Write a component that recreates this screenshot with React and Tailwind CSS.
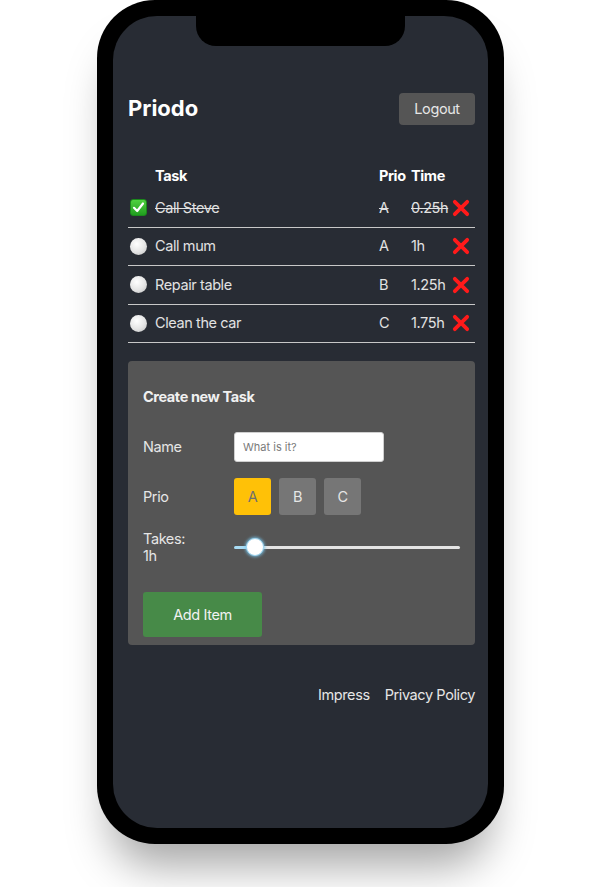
import React from "react";

const rows = [
  { done: true, name: "Call Steve", prio: "A", time: "0.25h" },
  { done: false, name: "Call mum", prio: "A", time: "1h" },
  { done: false, name: "Repair table", prio: "B", time: "1.25h" },
  { done: false, name: "Clean the car", prio: "C", time: "1.75h" },
];

function CheckBox() {
  return (
    <div className="w-[17px] h-[17px] rounded-[3px] bg-gradient-to-b from-[#4fd13f] to-[#1f9e1f] border border-[#1b8a1b] flex items-center justify-center">
      <svg width="13" height="13" viewBox="0 0 13 13">
        <path d="M2 6.8 L5.2 10 L11 2.5" fill="none" stroke="#fff" strokeWidth="2.2" strokeLinecap="round" strokeLinejoin="round" />
      </svg>
    </div>
  );
}

function Circle() {
  return (
    <div className="w-[17px] h-[17px] rounded-full bg-[radial-gradient(circle_at_40%_35%,#ffffff_0%,#e4e4e4_55%,#b9b9b9_100%)]" />
  );
}

function RedX() {
  return (
    <svg width="18" height="18" viewBox="0 0 18 18">
      <path d="M2.8 2.8 L15.2 15.2 M15.2 2.8 L2.8 15.2" stroke="#ff1a1a" strokeWidth="3.8" strokeLinecap="round" />
    </svg>
  );
}

export default function App() {
  return (
    <div className="w-[600px] h-[887px] bg-white overflow-hidden tracking-[-0.4px]" style={{ fontFamily: "Inter, 'Liberation Sans', sans-serif" }}>
      <div className="ml-[97px] w-[407px] h-[844px] bg-black rounded-[58px] p-[16px] pt-[16px] relative shadow-[0_36px_44px_-14px_rgba(0,0,0,0.35)]">
        <div className="w-[375px] h-[812px] bg-[#282c34] rounded-[44px] relative overflow-hidden">
          {/* notch */}
          <div className="absolute left-[83px] top-0 w-[209px] h-[30px] bg-black rounded-b-[20px]" />
          <div className="px-[15px] pr-[13px] pt-[77px] text-[#e6e6e6]">
            <div className="flex items-center justify-between h-[32px]">
              <div className="text-[22px] font-bold text-white leading-none mt-[-2px] tracking-normal">Priodo</div>
              <button className="w-[76px] h-[32px] rounded-[4px] bg-[#555555] text-[14.5px] text-[#e6e6e6]">Logout</button>
            </div>

            <div className="mt-[38px] grid grid-cols-[27px_1fr_32px_41px_23px] items-center h-[26px] text-[14.5px] font-bold text-white">
              <div />
              <div>Task</div>
              <div>Prio</div>
              <div>Time</div>
              <div />
            </div>

            {rows.map((r, i) => (
              <div
                key={i}
                className="grid grid-cols-[27px_1fr_32px_41px_23px] items-center h-[38.5px] border-b border-[#c8c8c8] text-[14.5px] text-[#e2e2e2]"
              >
                <div className="pl-[2px]">{r.done ? <CheckBox /> : <Circle />}</div>
                <div className={r.done ? "line-through" : ""}>{r.name}</div>
                <div className={r.done ? "line-through" : ""}>{r.prio}</div>
                <div className={r.done ? "line-through" : ""}>{r.time}</div>
                <div className="flex items-center"><RedX /></div>
              </div>
            ))}

            <div className="mt-[18px] bg-[#555555] rounded-[4px] px-[15px] pt-[27px] pb-[8px]">
              <div className="text-[14.5px] font-bold text-[#f0f0f0] leading-[18px]">Create new Task</div>

              <div className="mt-[26px] flex items-center h-[30px]">
                <div className="w-[91px] text-[14.5px] text-[#e6e6e6]">Name</div>
                <div className="w-[150px] h-[30px] bg-white rounded-[3px] border border-[#cfcfcf] flex items-center pl-[8px] text-[11px] text-[#7a7a7a] tracking-normal">What is it?</div>
              </div>

              <div className="mt-[16px] flex items-center h-[37px]">
                <div className="w-[91px] text-[14.5px] text-[#e6e6e6]">Prio</div>
                <div className="flex gap-[8px]">
                  <div className="w-[37px] h-[37px] rounded-[3px] bg-[#ffc107] flex items-center justify-center text-[14.5px] text-[#6f6f6f]">A</div>
                  <div className="w-[37px] h-[37px] rounded-[3px] bg-[#767676] flex items-center justify-center text-[14.5px] text-[#e6e6e6]">B</div>
                  <div className="w-[37px] h-[37px] rounded-[3px] bg-[#767676] flex items-center justify-center text-[14.5px] text-[#e6e6e6]">C</div>
                </div>
              </div>

              <div className="mt-[15px] flex items-center">
                <div className="w-[91px] text-[14.5px] leading-[17px] text-[#e6e6e6]">Takes:<br />1h</div>
                <div className="relative w-[226px] h-[18px] flex items-center">
                  <div className="w-[21px] h-[3px] bg-[#a9dcf4] rounded-l-full" />
                  <div className="flex-1 h-[3px] bg-[#e4e4e4] rounded-r-full" />
                  <div className="absolute left-[12px] top-0 w-[18px] h-[18px] rounded-full bg-white border border-[#9fd4ee] shadow-[0_0_3px_1px_rgba(120,200,240,0.8)]" />
                </div>
              </div>

              <button className="mt-[28px] w-[119px] h-[45px] rounded-[3px] bg-[#478a48] text-[14.5px] text-[#f2f2f2]">Add Item</button>
            </div>

            <div className="mt-[39px] flex justify-end gap-[15px] text-[14.5px] text-[#e6e6e6]">
              <span>Impress</span>
              <span>Privacy Policy</span>
            </div>
          </div>
        </div>
      </div>
    </div>
  );
}
